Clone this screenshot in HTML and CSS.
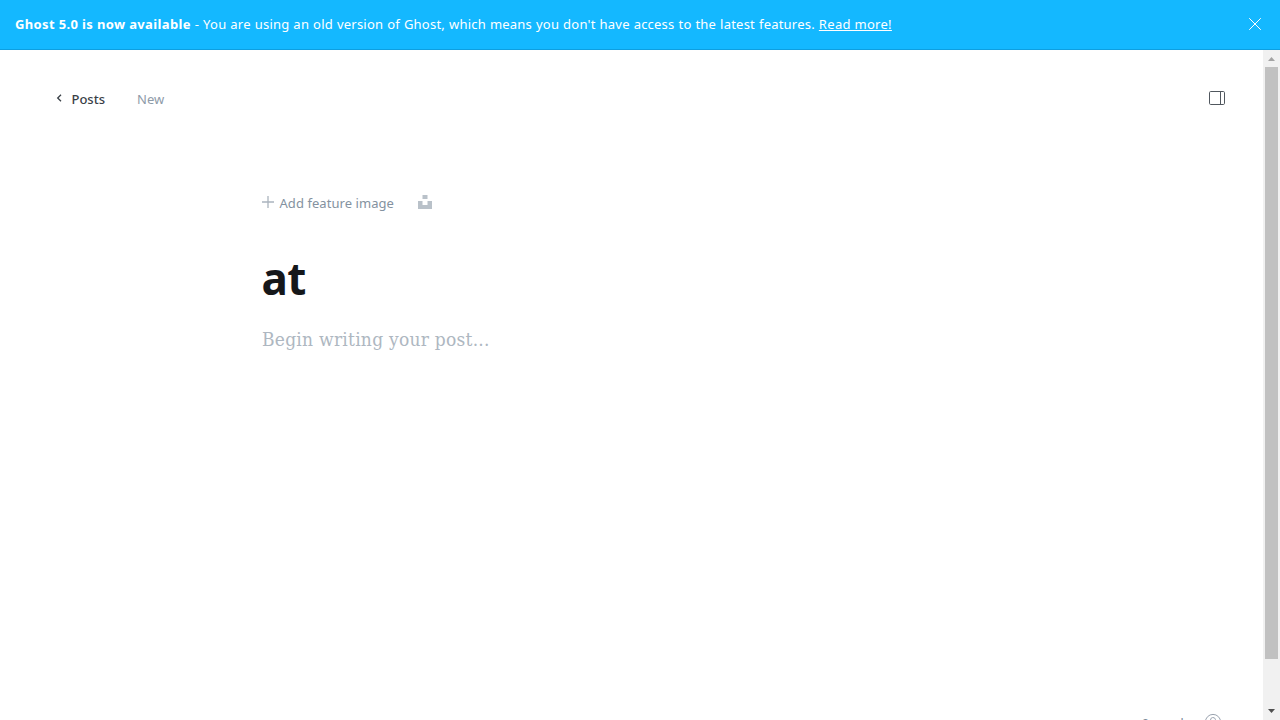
FILE: index.html
```html
<!DOCTYPE html>
<html lang="en">
<head>
<meta charset="utf-8">
<title>New post - Ghost</title>
<link rel="stylesheet" href="styles.css">
</head>
<body>
<div class="app">
  <aside class="alert">
    <p class="alert-text"><strong>Ghost 5.0 is now available</strong><span class="alert-body"> - You are using an old version of Ghost, which means you don't have access to the latest features. </span><a class="alert-link" href="#">Read more!</a></p>
    <button class="close" aria-label="Close"><svg width="14" height="14" viewBox="0 0 14 14"><path d="M1.2 1.2l11.6 11.6M12.8 1.2L1.2 12.8" fill="none" stroke="#fff" stroke-width="1"/></svg></button>
  </aside>
  <div class="viewport">
    <main class="editor">
      <header class="toolbar">
        <a class="back" href="#"><svg width="6" height="8" viewBox="0 0 6 8"><path d="M5 .7L1.7 4 5 7.3" fill="none" stroke="#394047" stroke-width="1.3"/></svg><span class="back-label">Posts</span></a>
        <span class="status">New</span>
        <button class="settings" aria-label="Settings"><svg width="16" height="14" viewBox="0 0 16 14"><rect x=".5" y=".5" width="15" height="13" rx="1.2" fill="none" stroke="#50575e"/><path d="M11.5 .5v13" stroke="#50575e" fill="none"/></svg></button>
      </header>
      <section class="content">
        <div class="feature">
          <svg class="plus" width="12" height="12" viewBox="0 0 12 12"><path d="M6 0v12M0 6h12" stroke="#abb4be" stroke-width="1.3"/></svg>
          <span class="feature-label">Add feature image</span>
          <svg class="unsplash" width="14" height="14" viewBox="0 0 14 14"><path d="M4.5 0h5v4h-5zM0 6h4.5v4h5V6H14v8H0z" fill="#b9c1c9"/></svg>
        </div>
        <h1 class="title">at</h1>
        <p class="placeholder">Begin writing your post...</p>
      </section>
      <footer class="status-bar">
        <span class="words">0 words</span>
        <svg width="18" height="18" viewBox="0 0 18 18"><circle cx="9" cy="9" r="7.6" fill="none" stroke="#9aa3af"/><path d="M6.5 7a2.5 2.5 0 1 1 3.5 2.3q-1 .5-1 1.7M9 12.4v1" fill="none" stroke="#9aa3af"/></svg>
      </footer>
    </main>
    <div class="scrollbar">
      <svg class="arrow" width="17" height="17" viewBox="0 0 17 17"><path d="M5 11h7L8.5 7z" fill="#a3a3a3"/></svg>
      <div class="thumb"></div>
      <svg class="arrow" width="17" height="17" viewBox="0 0 17 17"><path d="M5 6h7l-3.5 4z" fill="#505050"/></svg>
    </div>
  </div>
</div>
</body>
</html>
```
FILE: styles.css
```css
* { box-sizing: border-box; }
body { margin: 0; font-family: "Noto Sans", "Open Sans", sans-serif; font-size: 13px; color: #15171a; background: #fff; }
p, h1 { margin: 0; }
button { padding: 0; border: 0; background: none; display: flex; }
a { color: inherit; text-decoration: none; }
svg { display: block; flex: none; }
.app { height: 720px; display: flex; flex-direction: column; overflow: hidden; }
.alert { height: 50px; flex: none; display: flex; justify-content: space-between; align-items: center; padding: 0 18px 1px 15px; background: #14b8ff; border-bottom: 1px solid #0e9fe0; color: #fff; }
.alert-text { line-height: 20px; white-space: pre; letter-spacing: .3px; }
.alert-text strong { letter-spacing: .36px; }
.alert-body { letter-spacing: .22px; word-spacing: .35px; }
.alert-link { text-decoration: underline; }
.viewport { flex: 1; min-height: 0; display: flex; }
.editor { flex: 1; display: flex; flex-direction: column; min-width: 0; }
.toolbar { display: flex; align-items: center; height: 96px; padding: 0 38px 0 56px; line-height: 20px; flex: none; }
.back { display: flex; align-items: center; gap: 9.5px; width: 81px; color: #394047; }
.back-label { font-weight: 500; padding-top: 2px; }
.status { color: #8e9ba8; padding-top: 2px; }
.settings { margin-left: auto; }
.content { padding: 46px 0 0 262px; flex: none; }
.feature { display: flex; align-items: center; height: 20px; line-height: 20px; color: #8492a0; }
.feature-label { margin: 2px 0 0 5.5px; width: 138.5px; white-space: nowrap; letter-spacing: .06px; }
.title { margin-top: 36px; margin-left: -.5px; font-size: 44px; font-weight: 700; line-height: 60px; letter-spacing: -.5px; }
.placeholder { margin-top: 16px; font: 19px/30px "DejaVu Serif Condensed", "DejaVu Serif", serif; font-stretch: condensed; letter-spacing: .25px; color: #aeb7c1; white-space: nowrap; }
.status-bar { display: flex; flex: none; margin-top: auto; margin-bottom: -13px; justify-content: flex-end; gap: 14px; padding-right: 41px; color: #7c8b9a; line-height: 20px; }
.scrollbar { width: 17px; flex: none; display: flex; flex-direction: column; background: #f1f1f1; }
.thumb { width: 13px; height: 592px; margin: 0 2px; background: #c1c1c1; }
.arrow:last-child { margin-top: auto; }
```
